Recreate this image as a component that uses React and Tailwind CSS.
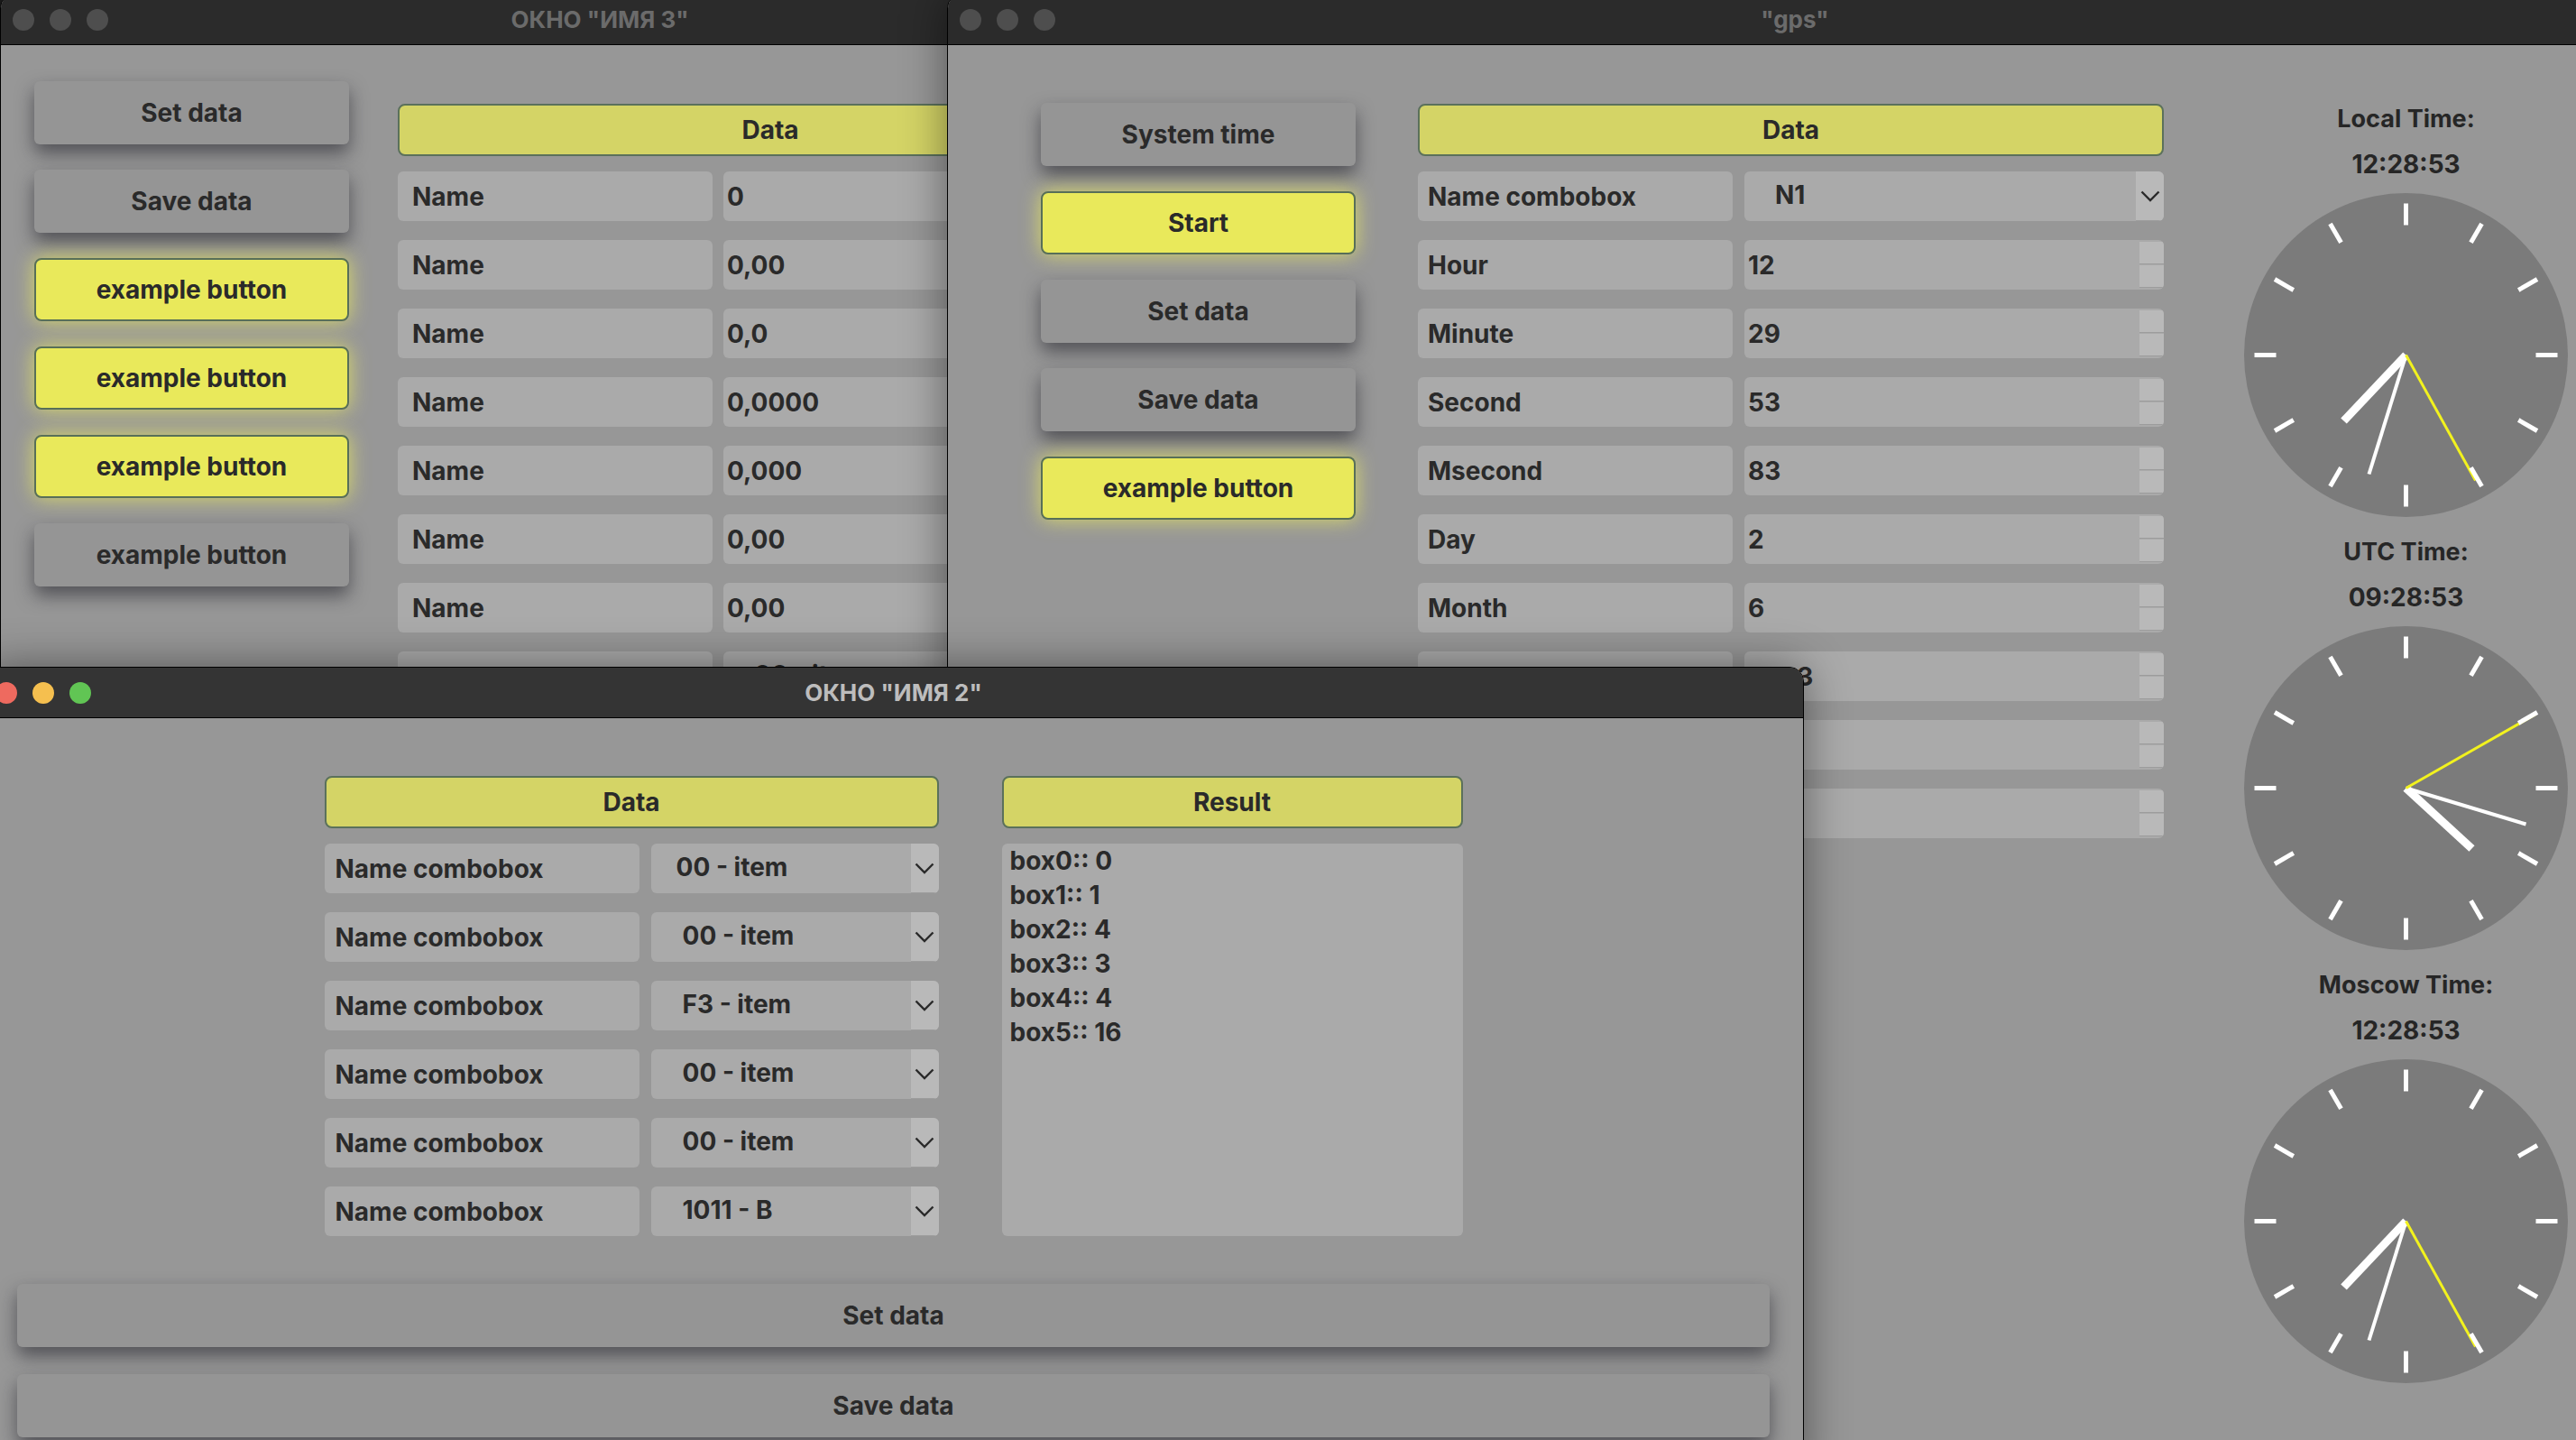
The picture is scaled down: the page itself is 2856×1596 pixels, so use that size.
import React from "react";

const FONT = "font-['Inter','Liberation_Sans',sans-serif]";

const Dots = ({ active }) => (
  <div className="flex gap-[17px] pl-[13px]">
    <span className={`h-[24px] w-[24px] rounded-full ${active ? "bg-[#ee6a5f]" : "bg-[#4e4e4e]"}`} />
    <span className={`h-[24px] w-[24px] rounded-full ${active ? "bg-[#f5bf4f]" : "bg-[#4e4e4e]"}`} />
    <span className={`h-[24px] w-[24px] rounded-full ${active ? "bg-[#61c554]" : "bg-[#4e4e4e]"}`} />
  </div>
);

const Window = ({ title, active, className, children }) => (
  <div
    className={`absolute flex flex-col overflow-hidden rounded-t-[16px] border border-black bg-[#979797] shadow-[0_0_50px_rgba(0,0,0,0.45)] ${className}`}
  >
    <div
      className={`relative flex h-[56px] shrink-0 items-center border-b border-black ${
        active ? "bg-[#343434]" : "bg-[#2b2b2b]"
      }`}
    >
      <Dots active={active} />
      <div
        className={`absolute inset-0 flex items-center justify-center text-[26px] font-bold ${
          active ? "text-[#bdbdbd]" : "text-[#6b6b6b]"
        }`}
      >
        {title}
      </div>
    </div>
    {children}
  </div>
);

const GrayButton = ({ children, className = "" }) => (
  <div
    className={`flex h-[70px] items-center justify-center rounded-[6px] bg-[#959595] text-[28px] font-bold text-[#2a2a2a] shadow-[0_10px_20px_rgba(25,25,35,0.55)] ${className}`}
  >
    {children}
  </div>
);

const YellowButton = ({ children }) => (
  <div className="flex h-[70px] items-center justify-center rounded-[8px] border-2 border-[#586f58] bg-[#e9e95b] text-[28px] font-bold text-[#2a2a2a] shadow-[0_0_22px_rgba(240,240,90,0.75)]">
    {children}
  </div>
);

const Header = ({ children }) => (
  <div className="flex h-[58px] items-center justify-center rounded-[8px] border-2 border-[#5b715b] bg-[#d4d466] text-[28px] font-bold text-[#2a2a2a]">
    {children}
  </div>
);

const Chevron = () => (
  <svg width="22" height="13" viewBox="0 0 22 13" fill="none" stroke="#2a2a2a" strokeWidth="2.4">
    <polyline points="1.5,1.5 11,11 20.5,1.5" />
  </svg>
);

const Label = ({ children, className = "" }) => (
  <div className={`flex h-[55px] shrink-0 items-center rounded-[6px] bg-[#aaaaaa] text-[28px] font-bold text-[#2a2a2a] ${className}`}>
    {children}
  </div>
);

const Combo = ({ value, pad = "pl-[34px]" }) => (
  <div className="flex h-[55px] flex-1 items-stretch overflow-hidden rounded-[6px] bg-[#aaaaaa] text-[28px] font-bold text-[#2a2a2a]">
    <div className={`flex flex-1 items-center pb-[4px] ${pad}`}>{value}</div>
    <div className="flex w-[31px] items-center justify-center border-b border-[#9c9c9c] bg-[#b9b9b9]">
      <Chevron />
    </div>
  </div>
);

const Spin = ({ value }) => (
  <div className="flex h-[55px] flex-1 items-stretch overflow-hidden rounded-[6px] bg-[#aaaaaa] text-[28px] font-bold text-[#2a2a2a]">
    <div className="flex flex-1 items-center pl-[4px]">{value}</div>
    <div className="flex w-[27px] flex-col gap-[1px] py-[2px]">
      <span className="flex-1 border-b border-[#9c9c9c] bg-[#b9b9b9]" />
      <span className="flex-1 border-b border-[#9c9c9c] bg-[#b9b9b9]" />
    </div>
  </div>
);

const Clock = ({ hands }) => {
  const ticks = Array.from({ length: 12 }, (_, i) => {
    const a = (i * Math.PI) / 6;
    return [Math.sin(a), -Math.cos(a)];
  });
  return (
    <svg width="359" height="359" viewBox="-179.5 -179.5 359 359">
      <circle cx="0" cy="0" r="179.5" fill="#7b7b7b" />
      <line x1="0" y1="0" x2={hands.h[0]} y2={hands.h[1]} stroke="#ffffff" strokeWidth="9" />
      <line x1="0" y1="0" x2={hands.m[0]} y2={hands.m[1]} stroke="#ffffff" strokeWidth="4" />
      <line x1="0" y1="0" x2={hands.s[0]} y2={hands.s[1]} stroke="#f2f21e" strokeWidth="3" />
      {ticks.map(([x, y], i) => (
        <line key={i} x1={x * 144} y1={y * 144} x2={x * 168} y2={y * 168} stroke="#ffffff" strokeWidth="5" />
      ))}
    </svg>
  );
};

const ClockBlock = ({ label, time, hands }) => (
  <div className="flex flex-col items-center pb-[14px] text-[#262626]">
    <div className="flex h-[50px] items-center text-[27px] font-bold">{label}</div>
    <div className="flex h-[50px] items-center text-[28px] font-bold">{time}</div>
    <div className="mt-[7px]">
      <Clock hands={hands} />
    </div>
  </div>
);

export default function App() {
  const w1Rows = ["0", "0,00", "0,0", "0,0000", "0,000", "0,00", "0,00"];
  const gpsRows = [
    ["Hour", "12"],
    ["Minute", "29"],
    ["Second", "53"],
    ["Msecond", "83"],
    ["Day", "2"],
    ["Month", "6"],
    ["Year", "2023"],
    ["Latitude", "55"],
    ["Longitude", "37"],
  ];
  const w2Rows = ["00 - item", "00 - item", "F3 - item", "00 - item", "00 - item", "1011 - B"];
  const results = ["box0:: 0", "box1:: 1", "box2:: 4", "box3:: 3", "box4:: 4", "box5:: 16"];
  const localHands = { h: [-69, 73], m: [-41, 132], s: [77, 139] };
  const utcHands = { h: [73, 67], m: [133, 40], s: [144, -82] };

  return (
    <div className={`relative h-[1596px] w-[2856px] overflow-hidden bg-[#1e1e1e] ${FONT}`}>
      {/* window "ИМЯ 3" */}
      <Window title={'ОКНО "ИМЯ 3"'} className="left-0 top-[-7px] h-[820px] w-[1330px]">
        <div className="flex items-start gap-[54px] pl-[37px] pt-[40px]">
          <div className="flex w-[349px] flex-col gap-[28px]">
            <GrayButton>Set data</GrayButton>
            <GrayButton>Save data</GrayButton>
            <YellowButton>example button</YellowButton>
            <YellowButton>example button</YellowButton>
            <YellowButton>example button</YellowButton>
            <GrayButton>example button</GrayButton>
          </div>
          <div className="mt-[25px] flex w-[826px] flex-col">
            <Header>Data</Header>
            <div className="mt-[17px] flex flex-col gap-[21px]">
              {w1Rows.map((v, i) => (
                <div key={i} className="flex gap-[12px]">
                  <Label className="w-[349px] pl-[16px]">Name</Label>
                  <Spin value={v} />
                </div>
              ))}
              <div className="flex gap-[12px]">
                <Label className="w-[349px] pl-[16px]">Name</Label>
                <Combo value="00 - item" />
              </div>
            </div>
          </div>
        </div>
      </Window>

      {/* window "gps" */}
      <Window title='"gps"' className="left-[1050px] top-[-7px] h-[1620px] w-[1880px]">
        <div className="flex items-start pl-[103px] pt-[57px]">
          <div className="mt-[7px] flex w-[349px] flex-col gap-[28px]">
            <GrayButton>System time</GrayButton>
            <YellowButton>Start</YellowButton>
            <GrayButton>Set data</GrayButton>
            <GrayButton>Save data</GrayButton>
            <YellowButton>example button</YellowButton>
          </div>
          <div className="ml-[69px] mt-[8px] flex w-[827px] flex-col">
            <Header>Data</Header>
            <div className="mt-[17px] flex flex-col gap-[21px]">
              <div className="flex gap-[13px]">
                <Label className="w-[349px] pl-[11px]">Name combobox</Label>
                <Combo value="N1" />
              </div>
              {gpsRows.map(([l, v]) => (
                <div key={l} className="flex gap-[13px]">
                  <Label className="w-[349px] pl-[11px]">{l}</Label>
                  <Spin value={v} />
                </div>
              ))}
            </div>
          </div>
          <div className="ml-[89px] flex w-[359px] flex-col">
            <ClockBlock label="Local Time:" time="12:28:53" hands={localHands} />
            <ClockBlock label="UTC Time:" time="09:28:53" hands={utcHands} />
            <ClockBlock label="Moscow Time:" time="12:28:53" hands={localHands} />
          </div>
        </div>
      </Window>

      {/* window "ИМЯ 2" */}
      <Window title={'ОКНО "ИМЯ 2"'} active className="left-[-19px] top-[739px] h-[900px] w-[2019px]">
        <div className="flex flex-col px-[37px] pt-[64px]">
          <div className="flex justify-center gap-[70px]">
            <div className="flex w-[681px] flex-col">
              <Header>Data</Header>
              <div className="mt-[17px] flex flex-col gap-[21px]">
                {w2Rows.map((v, i) => (
                  <div key={i} className="flex gap-[13px]">
                    <Label className="w-[349px] pl-[12px]">Name combobox</Label>
                    <Combo value={v} pad={i === 0 ? "pl-[28px]" : "pl-[35px]"} />
                  </div>
                ))}
              </div>
            </div>
            <div className="flex w-[511px] flex-col">
              <Header>Result</Header>
              <div className="mt-[17px] flex h-[435px] flex-col rounded-[6px] bg-[#aaaaaa] pl-[9px] text-[28px] font-bold leading-[38px] text-[#2a2a2a]">
                {results.map((r) => (
                  <div key={r}>{r}</div>
                ))}
              </div>
            </div>
          </div>
          <GrayButton className="mt-[53px]">Set data</GrayButton>
          <GrayButton className="mt-[30px]">Save data</GrayButton>
        </div>
      </Window>
    </div>
  );
}
